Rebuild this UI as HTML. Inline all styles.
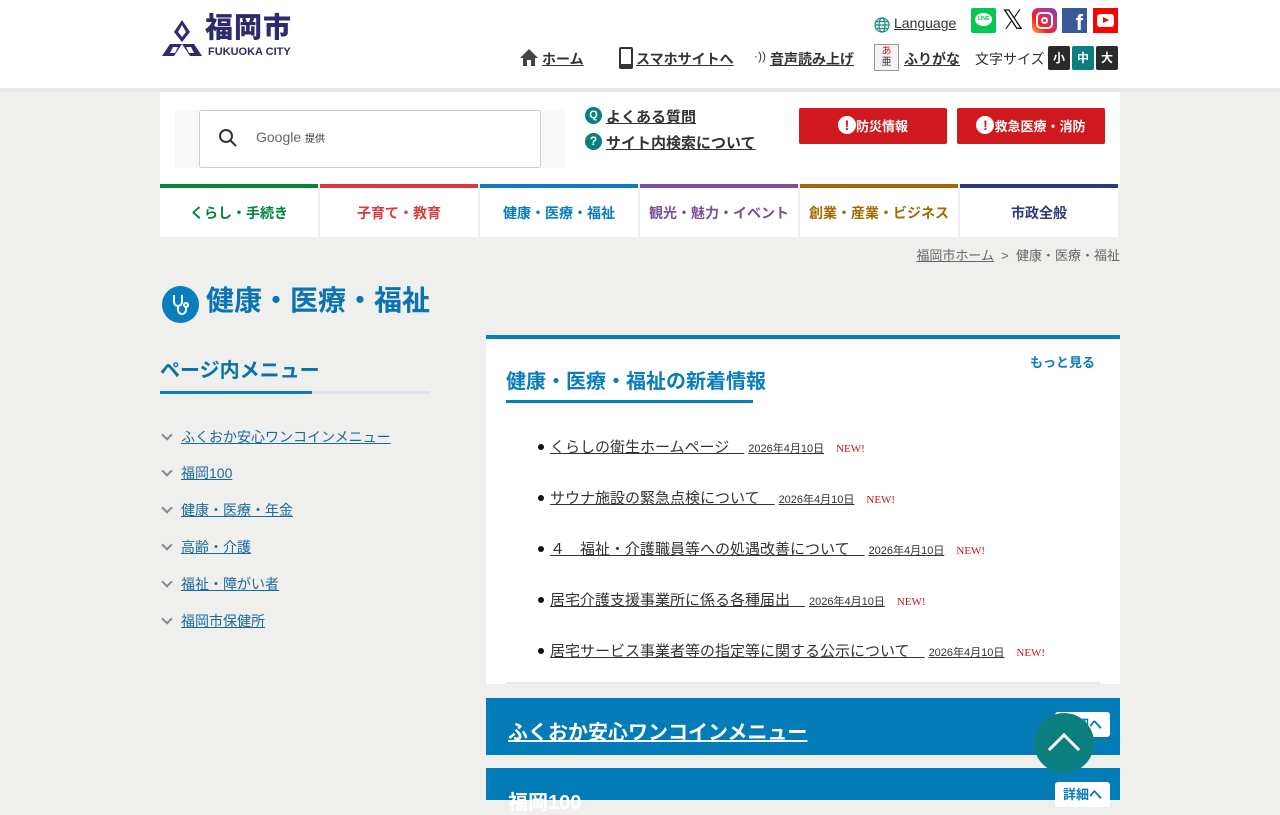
<!DOCTYPE html>
<html><head><meta charset="utf-8"><style>
*{margin:0;padding:0;box-sizing:border-box}
body{width:1280px;height:800px;overflow:hidden;background:#efefed;font-family:"Liberation Sans","Noto Sans CJK JP",sans-serif;color:#333;position:relative}
.a{position:absolute}
a{color:inherit}
.hdr{left:0;top:0;width:1280px;background:#fff;border-bottom:4px solid #e8e8e8;height:92px}
.nl{font-size:14px;font-weight:bold;text-decoration:underline;color:#333}
.tab{top:184px;width:158px;height:53px;background:#fff;border-top:4px solid;font-size:14px;font-weight:bold;text-align:center;line-height:50px}
.li{left:160px;font-size:14px;color:#1a6aa0}
.li span{text-decoration:underline}
.li i{display:inline-block;width:8px;height:8px;border-right:2px solid #888;border-bottom:2px solid #888;transform:rotate(45deg);margin:0 10px 3px 3px;font-style:normal}
.ni{left:538px;font-size:15px;color:#333;padding-left:12px}
.ni a{text-decoration:underline}
.ni small{font-size:11px;margin-left:4px}
.ni b{font-family:"Liberation Serif",serif;font-weight:normal;color:#d0121b;font-size:11px;margin-left:12px}
.ni:before{content:"";position:absolute;left:0;top:8px;width:6px;height:6px;border-radius:50%;background:#111}
.bar{left:486px;width:634px;height:57px;background:#037bb7}
.btn{width:55px;height:25px;background:#fff;border-radius:3px;color:#037bb7;font-size:13px;font-weight:bold;text-align:center;line-height:25px}
.red{top:108px;height:36px;background:#d0191f;border-radius:2px;color:#fff;font-size:13px;font-weight:bold;text-align:center;line-height:38px}
.red em{display:inline-block;width:18px;height:18px;border-radius:50%;background:#fff;color:#d0191f;font-style:normal;line-height:18px;font-size:14px;vertical-align:1px}
</style></head><body>
<div class="a hdr"></div>
<svg class="a" style="left:160px;top:18px" width="44" height="40" viewBox="0 0 44 40"><polygon points="22,2 30,14 22,24 14,14" fill="#2d2a6e"/><polygon points="22,7 26,14 22,19 18,14" fill="#fff"/><polygon points="2,38 10,26 22,26 14,38" fill="#2d2a6e"/><polygon points="42,38 34,26 22,26 30,38" fill="#2d2a6e"/><polygon points="10,35 13,29 18,29 15,35" fill="#fff"/><polygon points="34,35 31,29 26,29 29,35" fill="#fff"/></svg>
<div class="a" style="left:205px;top:12px;font-size:28px;font-weight:900;color:#2d2a6e;letter-spacing:1px;line-height:32px">福岡市</div>
<div class="a" style="left:208px;top:46px;font-size:11px;font-weight:bold;color:#2d2a6e;line-height:12px">FUKUOKA CITY</div>
<svg class="a" style="left:874px;top:17px" width="16" height="16" viewBox="0 0 16 16" fill="none" stroke="#1a8a8a" stroke-width="1.2"><circle cx="8" cy="8" r="7"/><ellipse cx="8" cy="8" rx="3" ry="7"/><path d="M1 8h14M2 4.5h12M2 11.5h12"/></svg>
<div class="a" style="left:894px;top:15px;font-size:14px;text-decoration:underline;color:#333">Language</div>
<div class="a" style="left:971px;top:8px;width:25px;height:25px;background:#06c755;border-radius:2px"><div style="margin:5px 4px;width:17px;height:13px;background:#fff;border-radius:50%;font-size:5px;color:#06c755;text-align:center;line-height:13px;font-weight:bold">LINE</div></div>
<div class="a" style="left:1002px;top:5px;font-size:27px;color:#111;line-height:30px">𝕏</div>
<div class="a" style="left:1032px;top:8px;width:25px;height:25px;border-radius:6px;background:linear-gradient(45deg,#fcb045,#fd1d1d,#c13584,#833ab4)"><div style="margin:4px;width:17px;height:17px;border:2px solid #fff;border-radius:5px;position:relative"><div style="position:absolute;left:3px;top:3px;width:7px;height:7px;border:2px solid #fff;border-radius:50%"></div></div></div>
<div class="a" style="left:1062px;top:8px;width:25px;height:25px;background:#3b5998;color:#fff;font-weight:bold;font-size:22px;text-align:right;padding-right:4px;line-height:30px">f</div>
<div class="a" style="left:1093px;top:8px;width:25px;height:25px;background:#f00"><div style="margin:6px 4px;width:17px;height:13px;background:#fff;border-radius:3px;position:relative"><div style="position:absolute;left:6px;top:3px;border-left:6px solid #f00;border-top:3.5px solid transparent;border-bottom:3.5px solid transparent"></div></div></div>
<svg class="a" style="left:519px;top:48px" width="20" height="19" viewBox="0 0 20 19"><path d="M10 1 L1 10 H4 V18 H8 V12 H12 V18 H16 V10 H19 Z" fill="#444"/></svg>
<div class="a nl" style="left:542px;top:49px">ホーム</div>
<div class="a" style="left:619px;top:47px;width:14px;height:22px;border:2px solid #333;border-radius:2px;border-bottom-width:5px"></div>
<div class="a nl" style="left:636px;top:49px">スマホサイトへ</div>
<div class="a" style="left:754px;top:49px;font-size:12px;color:#333">·))</div>
<div class="a nl" style="left:770px;top:49px">音声読み上げ</div>
<div class="a" style="left:874px;top:44px;width:25px;height:27px;border:1px solid #999;background:#f4f4f4;font-size:10px;text-align:center;line-height:11px;padding-top:1px"><span style="color:#d0191f">あ</span><br>亜</div>
<div class="a nl" style="left:904px;top:49px">ふりがな</div>
<div class="a" style="left:975px;top:49px;font-size:14px;color:#333">文字サイズ</div>
<div class="a" style="left:1048px;top:46px;width:22px;height:24px;background:#2a2a2a;color:#fff;font-size:12px;font-weight:bold;text-align:center;line-height:24px;border-radius:2px">小</div>
<div class="a" style="left:1072px;top:46px;width:22px;height:24px;background:#0b7f80;color:#fff;font-size:12px;font-weight:bold;text-align:center;line-height:24px;border-radius:2px">中</div>
<div class="a" style="left:1096px;top:46px;width:22px;height:24px;background:#2a2a2a;color:#fff;font-size:12px;font-weight:bold;text-align:center;line-height:24px;border-radius:2px">大</div>
<div class="a" style="left:160px;top:92px;width:960px;height:92px;background:#fff"></div>
<div class="a" style="left:175px;top:110px;width:390px;height:58px;background:#f8f8f8"></div>
<div class="a" style="left:199px;top:110px;width:342px;height:58px;background:#fff;border:1px solid #ccc;border-radius:3px"></div>
<svg class="a" style="left:218px;top:128px" width="20" height="20" viewBox="0 0 20 20" fill="none" stroke="#333" stroke-width="2"><circle cx="8" cy="8" r="6"/><path d="M12.5 12.5 L18 18"/></svg>
<div class="a" style="left:256px;top:129px;font-size:14px;color:#666">Google <span style="font-size:10px;color:#333">提供</span></div>
<div class="a" style="left:585px;top:107px;width:17px;height:17px;border-radius:50%;background:#0b7f80;color:#fff;font-size:11px;font-weight:bold;text-align:center;line-height:17px">Q</div>
<div class="a nl" style="left:606px;top:106px;font-size:15px">よくある質問</div>
<div class="a" style="left:585px;top:133px;width:17px;height:17px;border-radius:50%;background:#0b7f80;color:#fff;font-size:12px;font-weight:bold;text-align:center;line-height:17px">?</div>
<div class="a nl" style="left:606px;top:132px;font-size:15px">サイト内検索について</div>
<div class="a red" style="left:799px;width:148px"><em>!</em>防災情報</div>
<div class="a red" style="left:957px;width:148px"><em>!</em>救急医療・消防</div>
<div class="a tab" style="left:160px;border-color:#00843d;color:#00843d">くらし・手続き</div>
<div class="a tab" style="left:320px;border-color:#d83c3c;color:#d83c3c">子育て・教育</div>
<div class="a tab" style="left:480px;border-color:#0a7dbd;color:#0a7dbd">健康・医療・福祉</div>
<div class="a tab" style="left:640px;border-color:#7a4f9e;color:#7a4f9e">観光・魅力・イベント</div>
<div class="a tab" style="left:800px;border-color:#a06a00;color:#a06a00">創業・産業・ビジネス</div>
<div class="a tab" style="left:960px;border-color:#2e3a7c;color:#2e3a7c">市政全般</div>
<div class="a" style="right:160px;top:245px;font-size:13px;color:#666"><span style="text-decoration:underline">福岡市ホーム</span> &nbsp;&gt;&nbsp; 健康・医療・福祉</div>
<div class="a" style="left:162px;top:286px;width:37px;height:37px;border-radius:50%;background:#0a7dbd"></div>
<svg class="a" style="left:166px;top:290px" width="28" height="28" viewBox="0 0 28 28" fill="none" stroke="#fff" stroke-width="2"><path d="M8 5 V12 a4 4 0 0 0 8 0 V5"/><path d="M12 16 V20 a4 4 0 0 0 8 0 V17"/><circle cx="20" cy="15" r="2"/></svg>
<div class="a" style="left:206px;top:279px;font-size:28px;font-weight:bold;color:#0a73b3">健康・医療・福祉</div>
<div class="a" style="left:160px;top:354px;font-size:20px;font-weight:bold;color:#0b6fa8">ページ内メニュー</div>
<div class="a" style="left:160px;top:391px;width:270px;height:3px;background:#dde3ee"></div>
<div class="a" style="left:160px;top:391px;width:152px;height:3px;background:#0a7dbd"></div>
<div class="a li" style="top:427px"><i></i><span>ふくおか安心ワンコインメニュー</span></div>
<div class="a li" style="top:463px"><i></i><span>福岡100</span></div>
<div class="a li" style="top:500px"><i></i><span>健康・医療・年金</span></div>
<div class="a li" style="top:537px"><i></i><span>高齢・介護</span></div>
<div class="a li" style="top:574px"><i></i><span>福祉・障がい者</span></div>
<div class="a li" style="top:611px"><i></i><span>福岡市保健所</span></div>
<div class="a" style="left:486px;top:335px;width:634px;height:349px;background:#fff;border-top:4px solid #0a7dbd"></div>
<div class="a" style="left:1030px;top:352px;font-size:13px;font-weight:bold;color:#0a7dbd">もっと見る</div>
<div class="a" style="left:506px;top:365px;font-size:20px;font-weight:bold;color:#0a7dbd">健康・医療・福祉の新着情報</div>
<div class="a" style="left:506px;top:400px;width:247px;height:3px;background:#0a7dbd"></div>
<div class="a ni" style="top:436px"><a>くらしの衛生ホームページ　<small>2026年4月10日</small></a><b>NEW!</b></div>
<div class="a ni" style="top:487px"><a>サウナ施設の緊急点検について　<small>2026年4月10日</small></a><b>NEW!</b></div>
<div class="a ni" style="top:538px"><a>４　福祉・介護職員等への処遇改善について　<small>2026年4月10日</small></a><b>NEW!</b></div>
<div class="a ni" style="top:589px"><a>居宅介護支援事業所に係る各種届出　<small>2026年4月10日</small></a><b>NEW!</b></div>
<div class="a ni" style="top:640px"><a>居宅サービス事業者等の指定等に関する公示について　<small>2026年4月10日</small></a><b>NEW!</b></div>
<div class="a" style="left:506px;top:682px;width:594px;height:2px;background:#ece4ec"></div>
<div class="a bar" style="top:698px"></div>
<div class="a" style="left:508px;top:716px;font-size:20px;font-weight:bold;color:#fff;text-decoration:underline">ふくおか安心ワンコインメニュー</div>
<div class="a btn" style="left:1055px;top:712px">詳細へ</div>
<div class="a bar" style="top:768px;height:32px"></div>
<div class="a" style="left:508px;top:786px;font-size:20px;font-weight:bold;color:#fff">福岡100</div>
<div class="a btn" style="left:1055px;top:782px">詳細へ</div>
<div class="a" style="left:1034px;top:713px;width:60px;height:60px;border-radius:50%;background:#0b7f80"></div>
<svg class="a" style="left:1044px;top:726px" width="40" height="30" viewBox="0 0 40 30" fill="none" stroke="#fff" stroke-width="3"><path d="M5 24 L20 9 L35 24"/></svg>
</body></html>
